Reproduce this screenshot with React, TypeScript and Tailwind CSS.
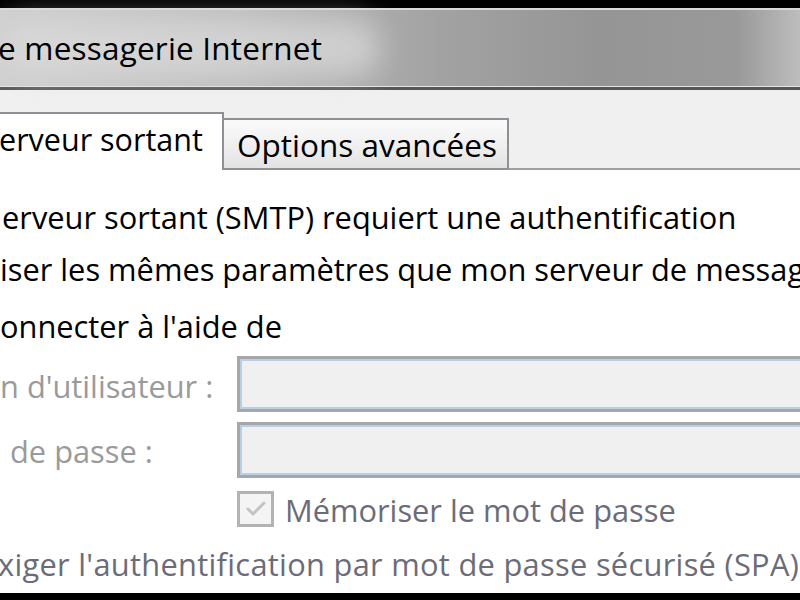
import { Check } from 'lucide-react';

const font = { fontFamily: '"Open Sans", "Noto Sans", sans-serif' };

function Field() {
  return (
    <div className="h-[56px] flex-1 border-[3px] border-[#a7a7a7] -mr-4">
      <div className="h-full border-2 border-[#b9cfe8] bg-[#f0f0f0]" />
    </div>
  );
}

export default function App() {
  return (
    <div className="w-[800px] h-[600px] bg-black overflow-hidden flex flex-col" style={font}>
      {/* Barre de titre */}
      <div className="mt-[8px] h-[2px] bg-[#d9d9d9]" />
      <div className="h-[76px] relative bg-[linear-gradient(90deg,#cfcfcf_0%,#bdbdbd_30%,#a2a2a2_55%,#959595_75%,#999999_92%,#bdbdbd_100%)] flex items-center">
        <div className="absolute left-0 top-[10px] w-[380px] h-[56px] rounded-full bg-[#dcdcdc] blur-[14px] opacity-70" />
        <span className="relative text-[31.5px] text-black -ml-[2px] tracking-[0.2px]">e messagerie Internet</span>
      </div>
      <div className="h-[1px] bg-[#e4e4e4]" />
      <div className="h-[3px] bg-[#565656]" />

      {/* Onglets */}
      <div className="h-[80px] bg-[#f0f0f0] flex items-end">
        <div className="h-[58px] w-[224px] bg-white border-t-2 border-r-2 border-[#8e9096] flex items-center">
          <span className="text-[30.5px] text-black -ml-[1px] -mt-[5px]">erveur sortant</span>
        </div>
        <div className="h-[52px] w-[285px] border-t-2 border-r-2 border-b-2 border-[#8e9096] bg-[linear-gradient(180deg,#fbfbfb_0%,#f1f1f1_45%,#e3e3e3_100%)] flex items-center pl-[13px]">
          <span className="text-[31.5px] text-black mt-[2px]">Options avancées</span>
        </div>
        <div className="flex-1 h-[2px] bg-[#a0a0a0]" />
      </div>

      {/* Contenu */}
      <div className="flex-1 bg-white mb-[7px] flex flex-col pt-[27px] text-[30.8px] whitespace-nowrap">
        <div className="h-[40px] flex items-center text-black ml-[2px]">erveur sortant (SMTP) requiert une authentification</div>
        <div className="h-[40px] flex items-center text-black mt-[12px]">iser les mêmes paramètres que mon serveur de messagerie</div>
        <div className="h-[40px] flex items-center text-black mt-[17px]">onnecter à l'aide de</div>

        <div className="flex items-center mt-[10px]">
          <span className="w-[237px] text-[#9a9a9a] mt-[4px]">n d'utilisateur :</span>
          <Field />
        </div>
        <div className="flex items-center mt-[10px]">
          <span className="w-[237px] text-[#9a9a9a] pl-[2px] mt-[2px]"> &nbsp;de passe :</span>
          <Field />
        </div>

        <div className="h-[36px] flex items-center mt-[13px] pl-[237px]">
          <div className="w-[37px] h-[36px] border-[3px] border-[#b3b3b3] bg-[#f4f4f4] flex items-center justify-center">
            <Check className="w-[24px] h-[24px] text-[#c3c3c3]" strokeWidth={3} />
          </div>
          <span className="ml-[11px] text-[#6c6c78] mt-[3px]">Mémoriser le mot de passe</span>
        </div>

        <div className="h-[40px] flex items-center text-[#6c6c78] mt-[17px] -ml-[2px] tracking-[0.3px]">xiger l'authentification par mot de passe sécurisé (SPA)</div>
      </div>
    </div>
  );
}
